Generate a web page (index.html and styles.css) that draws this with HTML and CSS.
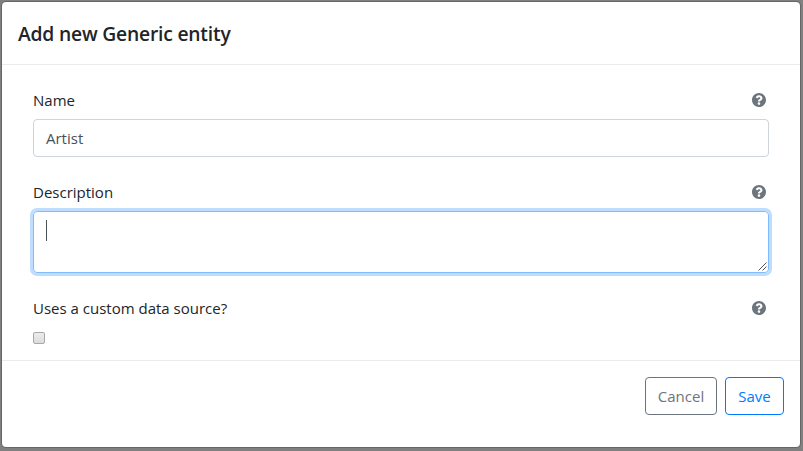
FILE: index.html
```html
<!DOCTYPE html>
<html lang="en">
<head>
<meta charset="utf-8">
<title>Add new Generic entity</title>
<link rel="stylesheet" href="styles.css">
</head>
<body>
<svg class="sprite" width="0" height="0">
  <symbol id="help" viewBox="8 8 496 496"><path fill="currentColor" d="M504 256c0 136.997-111.043 248-248 248S8 392.997 8 256C8 119.083 119.043 8 256 8s248 111.083 248 248zM262.655 90c-54.497 0-89.255 22.957-116.549 63.758-3.536 5.286-2.353 12.415 2.715 16.258l34.699 26.31c5.205 3.947 12.621 3.008 16.665-2.122 17.864-22.658 30.113-35.797 57.303-35.797 20.429 0 45.698 13.148 45.698 32.958 0 14.976-12.363 22.667-32.534 33.976C247.128 238.528 216 254.941 216 296v4c0 6.627 5.373 12 12 12h56c6.627 0 12-5.373 12-12v-1.333c0-28.462 83.186-29.647 83.186-106.667 0-58.002-60.165-102-116.531-102zM256 338c-25.365 0-46 20.635-46 46 0 25.364 20.635 46 46 46s46-20.636 46-46c0-25.365-20.635-46-46-46z"/></symbol>
</svg>
<main class="modal">
  <header class="modal-header"><h5 class="modal-title">Add new Generic entity</h5></header>
  <section class="modal-body">
    <div class="group">
      <div class="row"><label class="label">Name</label><svg class="help"><use href="#help"/></svg></div>
      <div class="control"><span class="value">Artist</span></div>
    </div>
    <div class="group">
      <div class="row"><label class="label">Description</label><svg class="help"><use href="#help"/></svg></div>
      <div class="control area focused">
        <span class="caret"></span>
        <svg class="grip" viewBox="0 0 9 9"><path d="M.5 8.5l8-8M4.500 8.500l4-4" fill="none" stroke="#555"/></svg>
      </div>
    </div>
    <div class="group">
      <div class="row"><label class="label">Uses a custom data source?</label><svg class="help"><use href="#help"/></svg></div>
      <div class="checkbox"></div>
    </div>
  </section>
  <footer class="modal-footer">
    <button class="btn cancel"><span>Cancel</span></button>
    <button class="btn save"><span>Save</span></button>
  </footer>
</main>
</body>
</html>
```
FILE: styles.css
```css
* { box-sizing: border-box; }
body {
  margin: 0;
  height: 451px;
  padding: 1px 2px 3px 1px;
  overflow: hidden;
  background: #808080;
  color: #212529;
  font: 15px/24px "Open Sans", "Noto Sans", sans-serif;
}
.sprite { position: absolute; }
.modal {
  display: flex;
  flex-direction: column;
  height: 447px;
  background: #fff;
  background-clip: padding-box;
  border: 1px solid rgba(0, 0, 0, .2);
  border-radius: 5px;
}
.modal-header {
  height: 63px;
  padding: 17px 16px 0;
  border-bottom: 1px solid #e9ecef;
}
.modal-title {
  margin: 0;
  font-size: 19.3px;
  line-height: 30px;
  font-weight: 600;
  letter-spacing: -.2px;
}
.modal-body {
  display: flex;
  flex-direction: column;
  gap: 24px;
  height: 296px;
  padding: 23px 31px 0;
  border-bottom: 1px solid #e9ecef;
}
.row {
  display: flex;
  justify-content: space-between;
  align-items: center;
  height: 24px;
  margin-bottom: 7px;
  padding-right: 3px;
}
.group + .group { margin-top: -1px; }
.help { width: 14px; height: 14px; color: #6c757d; }
.control {
  position: relative;
  height: 38px;
  padding: 6px 12px;
  border: 1px solid #ced4da;
  border-radius: 4px;
  color: #495057;
}
.area { height: 62px; }
.focused {
  border-color: #80bdff;
  box-shadow: 0 0 0 3px #bfdeff;
}
.caret {
  display: block;
  width: 1px;
  height: 21px;
  margin-top: 2px;
  background: #495057;
}
.grip {
  position: absolute;
  right: 1px;
  bottom: 1px;
  width: 9px;
  height: 9px;
}
.checkbox {
  width: 12px;
  height: 12px;
  margin-top: 12px;
  border: 1px solid #a8a8a8;
  border-radius: 2px;
  background: linear-gradient(#ececec, #dcdcdc);
}
.modal-footer {
  display: flex;
  justify-content: flex-end;
  gap: 8px;
  padding: 16px 16px 0;
}
.btn {
  display: flex;
  justify-content: center;
  align-items: center;
  height: 38px;
  padding: 0;
  border: 1px solid;
  border-radius: 4px;
  background: #fff;
  font: inherit;
  white-space: nowrap;
}
.cancel { width: 72px; color: #6c757d; }
.save { width: 59px; color: #007bff; }
```
